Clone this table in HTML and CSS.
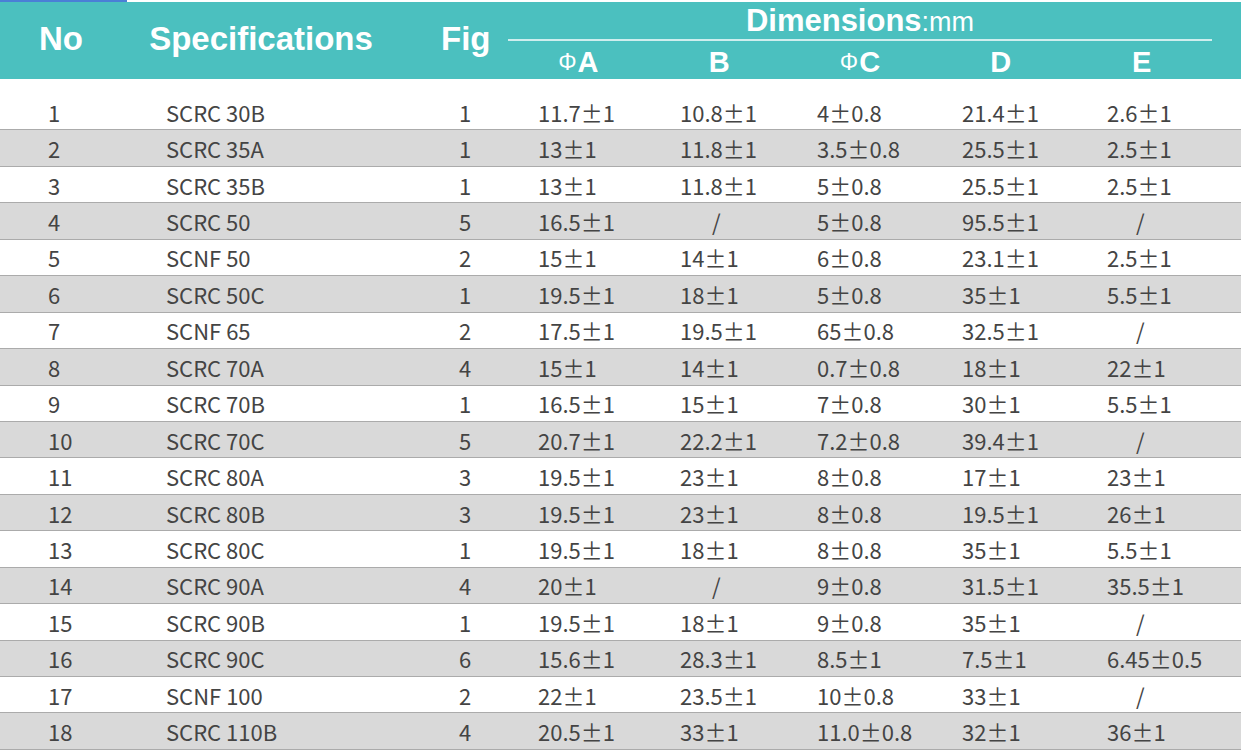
FILE: index.html
```html
<!DOCTYPE html>
<html>
<head>
<meta charset="utf-8">
<link rel="stylesheet" href="styles.css">
</head>
<body>
<div class="topbar"><div class="topbar-accent"></div></div>
<div class="head">
  <div class="h-no">No</div>
  <div class="h-spec">Specifications</div>
  <div class="h-fig">Fig</div>
  <div class="h-dims">
    <div class="h-title">Dimensions<span class="unit">:mm</span></div>
    <div class="h-rule"></div>
    <div class="h-subs">
      <div class="h-sub"><span class="phi">Φ</span>A</div>
      <div class="h-sub">B</div>
      <div class="h-sub"><span class="phi">Φ</span>C</div>
      <div class="h-sub">D</div>
      <div class="h-sub">E</div>
    </div>
  </div>
</div>
<div class="body">
  <div class="row"><span>1</span><span>SCRC 30B</span><span>1</span><span>11.7±1</span><span>10.8±1</span><span>4±0.8</span><span>21.4±1</span><span>2.6±1</span></div>
  <div class="row alt"><span>2</span><span>SCRC 35A</span><span>1</span><span>13±1</span><span>11.8±1</span><span>3.5±0.8</span><span>25.5±1</span><span>2.5±1</span></div>
  <div class="row"><span>3</span><span>SCRC 35B</span><span>1</span><span>13±1</span><span>11.8±1</span><span>5±0.8</span><span>25.5±1</span><span>2.5±1</span></div>
  <div class="row alt"><span>4</span><span>SCRC 50</span><span>5</span><span>16.5±1</span><span class="na-b">/</span><span>5±0.8</span><span>95.5±1</span><span class="na-e">/</span></div>
  <div class="row"><span>5</span><span>SCNF 50</span><span>2</span><span>15±1</span><span>14±1</span><span>6±0.8</span><span>23.1±1</span><span>2.5±1</span></div>
  <div class="row alt"><span>6</span><span>SCRC 50C</span><span>1</span><span>19.5±1</span><span>18±1</span><span>5±0.8</span><span>35±1</span><span>5.5±1</span></div>
  <div class="row"><span>7</span><span>SCNF 65</span><span>2</span><span>17.5±1</span><span>19.5±1</span><span>65±0.8</span><span>32.5±1</span><span class="na-e">/</span></div>
  <div class="row alt"><span>8</span><span>SCRC 70A</span><span>4</span><span>15±1</span><span>14±1</span><span>0.7±0.8</span><span>18±1</span><span>22±1</span></div>
  <div class="row"><span>9</span><span>SCRC 70B</span><span>1</span><span>16.5±1</span><span>15±1</span><span>7±0.8</span><span>30±1</span><span>5.5±1</span></div>
  <div class="row alt"><span>10</span><span>SCRC 70C</span><span>5</span><span>20.7±1</span><span>22.2±1</span><span>7.2±0.8</span><span>39.4±1</span><span class="na-e">/</span></div>
  <div class="row"><span>11</span><span>SCRC 80A</span><span>3</span><span>19.5±1</span><span>23±1</span><span>8±0.8</span><span>17±1</span><span>23±1</span></div>
  <div class="row alt"><span>12</span><span>SCRC 80B</span><span>3</span><span>19.5±1</span><span>23±1</span><span>8±0.8</span><span>19.5±1</span><span>26±1</span></div>
  <div class="row"><span>13</span><span>SCRC 80C</span><span>1</span><span>19.5±1</span><span>18±1</span><span>8±0.8</span><span>35±1</span><span>5.5±1</span></div>
  <div class="row alt"><span>14</span><span>SCRC 90A</span><span>4</span><span>20±1</span><span class="na-b">/</span><span>9±0.8</span><span>31.5±1</span><span>35.5±1</span></div>
  <div class="row"><span>15</span><span>SCRC 90B</span><span>1</span><span>19.5±1</span><span>18±1</span><span>9±0.8</span><span>35±1</span><span class="na-e">/</span></div>
  <div class="row alt"><span>16</span><span>SCRC 90C</span><span>6</span><span>15.6±1</span><span>28.3±1</span><span>8.5±1</span><span>7.5±1</span><span>6.45±0.5</span></div>
  <div class="row"><span>17</span><span>SCNF 100</span><span>2</span><span>22±1</span><span>23.5±1</span><span>10±0.8</span><span>33±1</span><span class="na-e">/</span></div>
  <div class="row alt"><span>18</span><span>SCRC 110B</span><span>4</span><span>20.5±1</span><span>33±1</span><span>11.0±0.8</span><span>32±1</span><span>36±1</span></div>
</div>
</body>
</html>
```
FILE: styles.css
```css
html, body {
  margin: 0;
  padding: 0;
  background: #ffffff;
}
body {
  width: 1241px;
  height: 752px;
  overflow: hidden;
}
.topbar {
  height: 2px;
  background: #ffffff;
}
.topbar-accent {
  width: 127px;
  height: 2px;
  background: #4a7fd6;
}
.head {
  height: 77px;
  background: #4bc0bf;
  color: #ffffff;
  font-family: "Liberation Sans", Arial, sans-serif;
  font-weight: bold;
  display: flex;
  align-items: flex-start;
}
.h-no, .h-spec, .h-fig {
  font-size: 33px;
  line-height: 33px;
  padding-top: 20px;
}
.h-no {
  width: 122px;
  text-align: center;
}
.h-spec {
  width: 278px;
  text-align: center;
}
.h-fig {
  width: 67px;
  padding-left: 41px;
  box-sizing: content-box;
}
.h-dims {
  width: 704px;
  display: flex;
  flex-direction: column;
  padding-top: 4px;
}
.h-title {
  font-size: 31px;
  line-height: 30px;
  text-align: center;
}
.unit {
  font-weight: normal;
  font-size: 27px;
}
.h-rule {
  height: 2px;
  margin-top: 2px;
  background: #cfeeee;
}
.h-subs {
  display: grid;
  grid-template-columns: repeat(5, 1fr);
  margin-top: 7px;
}
.h-sub {
  font-size: 29px;
  line-height: 29px;
  text-align: center;
}
.phi {
  font-weight: normal;
  font-size: 23px;
  vertical-align: 2px;
  margin-right: 1px;
}
.body {
  margin-top: 15px;
  font-family: "Noto Sans CJK SC", "Noto Sans", sans-serif;
  font-size: 22px;
  color: #444444;
}
.row {
  height: 36.44px;
  box-sizing: border-box;
  border-bottom: 1px solid #ababab;
  display: grid;
  grid-template-columns: 118px 293px 79px 142px 137px 145px 145px 1fr;
  padding-left: 48px;
  align-items: center;
  line-height: 1;
}
.row.alt {
  background: #d9d9d9;
}
.na-b {
  padding-left: 32px;
}
.na-e {
  padding-left: 29px;
}
```
